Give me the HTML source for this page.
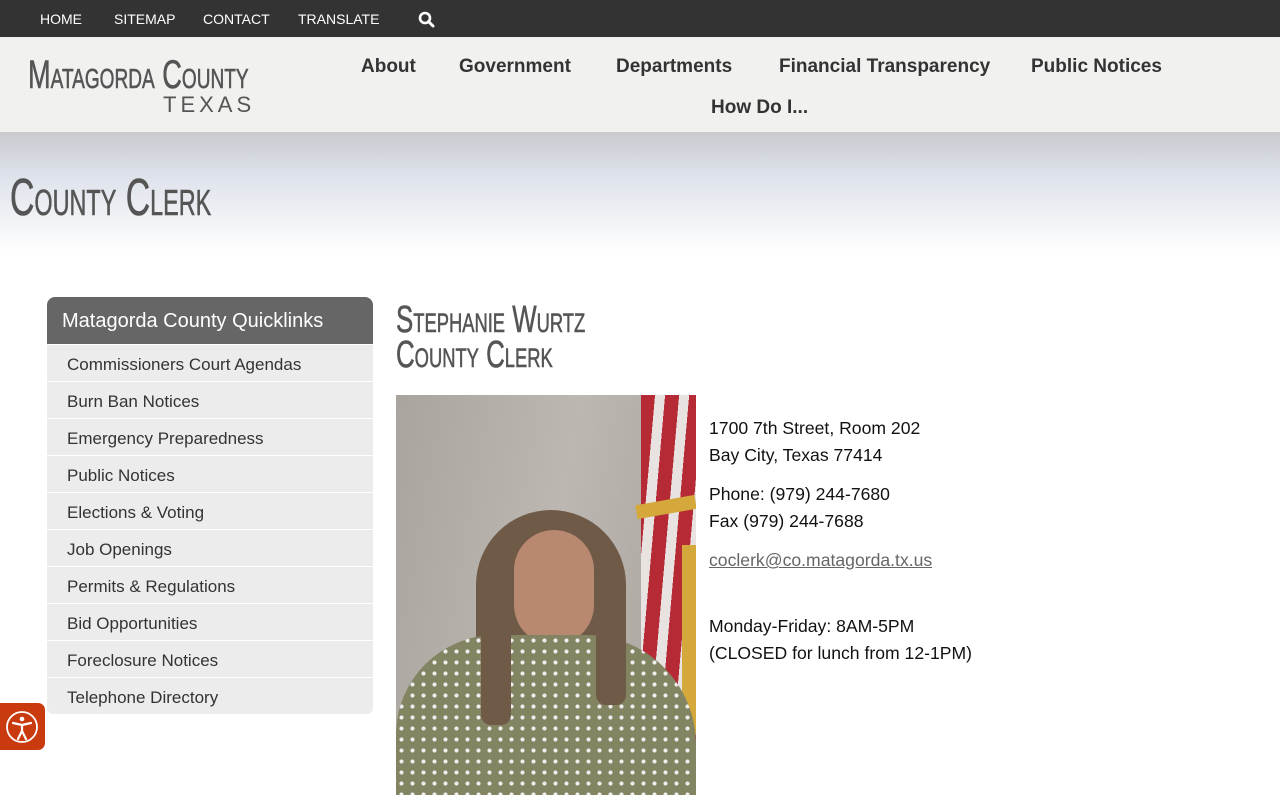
<!DOCTYPE html>
<html><head><meta charset="utf-8"><style>
*{margin:0;padding:0;box-sizing:border-box}
body{width:1280px;height:800px;overflow:hidden;background:#fff;font-family:"Liberation Sans",sans-serif;position:relative}
.top{height:37px;background:#333;color:#fff;font-size:14px;position:relative}
.top span{position:absolute;top:11px}
.hdr{height:95px;background:#f1f1ef;position:relative}
.cond{font-family:"Liberation Sans Narrow","Liberation Sans",sans-serif;font-variant:small-caps;display:inline-block;transform-origin:0 0;-webkit-text-stroke:0.6px currentColor}
.nav{position:absolute;font-weight:bold;font-size:19px;color:#333}
.banner{height:120px;background:linear-gradient(#c8cace 0%,#dde1ea 35%,#fff 100%);position:relative}
.side{position:absolute;left:47px;top:297px;width:326px}
.side .h{background:#666;color:#fff;font-size:20px;height:47px;padding:13px 15px;border-radius:8px 8px 0 0}
.side .i{background:#ececec;height:37px;border-top:1px solid #fff;font-size:17px;color:#333;padding:10px 20px 0}
.side .i:last-child{border-radius:0 0 6px 6px}
.info{position:absolute;left:709px;font-size:17.6px;color:#111;line-height:27px}
</style></head><body>
<div class="top">
<span style="left:40px">HOME</span><span style="left:114px">SITEMAP</span><span style="left:203px">CONTACT</span><span style="left:298px">TRANSLATE</span>
<svg style="position:absolute;left:418px;top:11px" width="17" height="17" viewBox="0 0 17 17"><circle cx="7" cy="7" r="5" fill="none" stroke="#fff" stroke-width="2.6"/><path d="M10.5 10.5l4.5 4.5" stroke="#fff" stroke-width="3" stroke-linecap="round"/></svg>
</div>
<div class="hdr">
<div class="cond" style="position:absolute;left:28px;top:16px;font-size:40px;color:#555;transform:scaleX(.68);white-space:nowrap">Matagorda County</div>
<div style="position:absolute;left:163px;top:55px;font-size:22px;letter-spacing:4px;color:#555">TEXAS</div>
<span class="nav" style="left:361px;top:19px">About</span>
<span class="nav" style="left:459px;top:19px">Government</span>
<span class="nav" style="left:616px;top:19px">Departments</span>
<span class="nav" style="left:779px;top:19px">Financial Transparency</span>
<span class="nav" style="left:1031px;top:19px">Public Notices</span>
<span class="nav" style="left:711px;top:60px">How Do I...</span>
</div>
<div class="banner">
<div class="cond" style="position:absolute;left:10px;top:36px;font-size:52px;color:#555;transform:scaleX(.65);white-space:nowrap">County Clerk</div>
</div>
<div class="side">
<div class="h">Matagorda County Quicklinks</div>
<div class="i">Commissioners Court Agendas</div>
<div class="i">Burn Ban Notices</div>
<div class="i">Emergency Preparedness</div>
<div class="i">Public Notices</div>
<div class="i">Elections &amp; Voting</div>
<div class="i">Job Openings</div>
<div class="i">Permits &amp; Regulations</div>
<div class="i">Bid Opportunities</div>
<div class="i">Foreclosure Notices</div>
<div class="i">Telephone Directory</div>
</div>
<div class="cond" style="position:absolute;left:396px;top:303px;font-size:38px;line-height:35px;color:#555;transform:scaleX(.68);white-space:nowrap">Stephanie Wurtz<br>County Clerk</div>
<div style="position:absolute;left:396px;top:395px;width:300px;height:400px;overflow:hidden;background:linear-gradient(100deg,#aaa49e,#bcb7b1 50%,#a8a29b)">
<div style="position:absolute;left:245px;top:0;width:55px;height:400px;background:repeating-linear-gradient(95deg,#b52a35 0 14px,#e8e3e0 14px 24px)"></div>
<div style="position:absolute;left:240px;top:105px;width:60px;height:14px;background:#d4a83a;transform:rotate(-10deg)"></div>
<div style="position:absolute;left:286px;top:150px;width:14px;height:190px;background:#d4a83a"></div>
<div style="position:absolute;left:80px;top:115px;width:150px;height:230px;border-radius:75px 75px 20px 20px;background:#6f5a48"></div>
<div style="position:absolute;left:118px;top:135px;width:80px;height:115px;border-radius:40px;background:#b98870"></div>
<div style="position:absolute;left:0;top:240px;width:300px;height:200px;border-radius:100px 110px 0 0;background:radial-gradient(#eee 1.8px,transparent 2.3px) 0 0/11px 11px,#838462"></div>
<div style="position:absolute;left:85px;top:200px;width:30px;height:130px;background:#6f5a48;border-radius:10px"></div>
<div style="position:absolute;left:200px;top:200px;width:30px;height:110px;background:#6f5a48;border-radius:10px"></div>
</div>
<div class="info" style="top:415px">1700 7th Street, Room 202<br>Bay City, Texas 77414</div>
<div class="info" style="top:481px">Phone: (979) 244-7680<br>Fax (979) 244-7688</div>
<div class="info" style="top:547px;color:#666;text-decoration:underline">coclerk@co.matagorda.tx.us</div>
<div class="info" style="top:613px">Monday-Friday: 8AM-5PM<br>(CLOSED for lunch from 12-1PM)</div>
<div style="position:absolute;left:0;top:703px;width:45px;height:47px;background:#c93a0f;border-radius:0 7px 7px 0">
<svg width="45" height="47" viewBox="0 0 45 47"><circle cx="22" cy="24" r="15" fill="none" stroke="#fff" stroke-width="1.8"/><circle cx="22" cy="16" r="2.3" fill="#fff"/><path d="M13 20l9 2 9-2M22 22v6l-4 8M22 28l4 8" stroke="#fff" stroke-width="2.2" fill="none" stroke-linecap="round"/></svg>
</div>
</body></html>
